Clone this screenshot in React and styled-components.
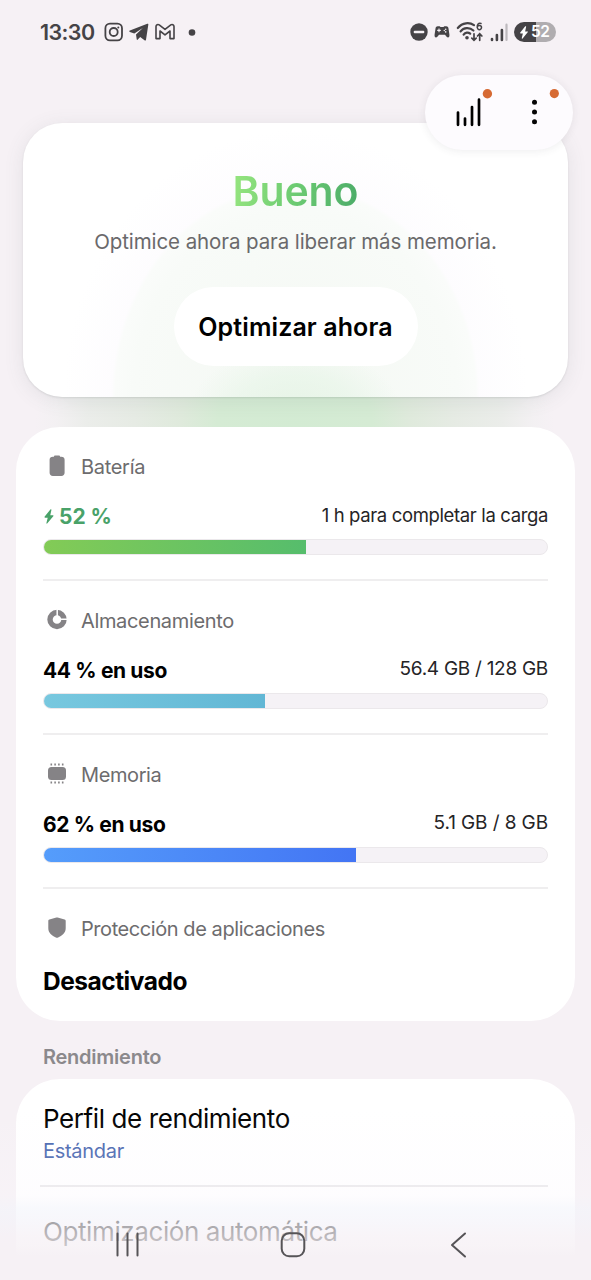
import React from "react";
import styled, { createGlobalStyle } from "styled-components";

const GlobalStyle = createGlobalStyle`
  *, *::before, *::after { box-sizing: border-box; }
  body {
    margin: 0;
    background: #f6f1f5;
    font-family: Inter, "Open Sans", sans-serif;
    color: #000;
  }
`;

const Screen = styled.div`
  position: relative;
  width: 591px;
  height: 1280px;
  overflow: hidden;
  background: #f6f1f5;
`;

const StatusBar = styled.header`
  display: flex;
  align-items: center;
  justify-content: space-between;
  height: 64px;
  padding: 0 35px 0 40px;
  color: #454346;
`;

const StatusGroup = styled.div`
  display: flex;
  align-items: center;
  gap: ${(p) => p.$gap || 0}px;
  height: 24px;

  svg { display: block; flex: none; }
`;

const Clock = styled.span`
  width: 64px;
  font-size: 21.5px;
  line-height: 24px;
  font-weight: 570;
  letter-spacing: -0.6px;
  white-space: nowrap;
`;

const BatteryPill = styled.span`
  display: flex;
  align-items: center;
  gap: 2px;
  width: 42px;
  height: 20px;
  padding-left: 5px;
  border-radius: 10px;
  background: linear-gradient(90deg, #454346 52%, #b0adb0 52%);
  color: #fff;
  font-size: 15.5px;
  line-height: 20px;
  font-weight: 600;
  letter-spacing: -0.6px;
`;

const Actions = styled.div`
  position: absolute;
  z-index: 2;
  top: 75px;
  left: 425px;
  display: flex;
  width: 148px;
  height: 75px;
  border-radius: 38px;
  background: #fdfbfe;
  box-shadow: 0 1px 8px rgba(60, 50, 70, 0.09);
`;

const Glow = styled.div`
  position: absolute;
  top: 190px;
  left: 35px;
  width: 520px;
  height: 480px;
  border-radius: 50%;
  background: radial-gradient(
    closest-side,
    #d3ebd3 0%,
    #d5ebd4 30%,
    #dfeadc 44%,
    #e6ebe4 62%,
    #ebedea 80%,
    rgba(240, 240, 240, 0.5) 92%,
    rgba(246, 241, 245, 0) 100%
  );
`;

const Hero = styled.section`
  position: relative;
  display: flex;
  flex-direction: column;
  align-items: center;
  width: 545px;
  height: 274px;
  margin: 59px 0 0 23px;
  padding-top: 44px;
  border-radius: 39px;
  background:
    radial-gradient(ellipse 105px 60px at 50% 104%, rgba(230, 244, 230, 0.9), rgba(230, 245, 231, 0.6) 55%, rgba(230, 245, 231, 0) 100%),
    radial-gradient(ellipse 184px 212px at 50% 100%, #f4f8f3 0%, #f8fbf8 88%, #fafcfa 98%, rgba(253, 252, 254, 0.9) 100%, rgba(255, 255, 255, 0) 126%),
    #fff;
  box-shadow: 0 1px 2px rgba(70, 80, 80, 0.13), 0 3px 20px rgba(80, 100, 100, 0.11);
`;

const Rating = styled.h1`
  margin: 0;
  font-size: 41px;
  line-height: 48px;
  font-weight: 640;
  letter-spacing: -0.1px;
  color: transparent;
  background: linear-gradient(100deg, #93e37e 5%, #6ccb72 50%, #4eae69 95%);
  background-clip: text;
`;

const Advice = styled.p`
  margin: 14px 0 0;
  font-size: 20.5px;
  line-height: 26px;
  letter-spacing: -0.09px;
  white-space: nowrap;
  color: #6a696b;
`;

const PrimaryButton = styled.button`
  width: 244px;
  height: 79px;
  margin-top: 32px;
  padding: 1px 0 0;
  border: 0;
  border-radius: 40px;
  background: #fff;
  font: 570 25px/78px Inter, sans-serif;
  letter-spacing: 0.1px;
  color: #000;
`;

const Card = styled.section`
  position: relative;
  width: 559px;
  height: ${(p) => p.$height}px;
  margin: ${(p) => p.$top}px 0 0 16px;
  padding: 0 27px;
  border-radius: 44px;
  background: #fff;
`;

const Metric = styled.article`
  padding: 27px 0 24px;
  border-bottom: 2px solid #efeeef;

  &:last-child { border-bottom: 0; }
`;

const MetricHead = styled.div`
  display: flex;
  align-items: center;
  height: 26px;

  svg { display: block; width: 28px; height: 28px; flex: none; margin: -2px 10px 0 0; }
`;

const MetricName = styled.span`
  font-size: 20px;
  line-height: 26px;
  letter-spacing: ${(p) => p.$track || 0}px;
  white-space: nowrap;
  color: #6d6c6e;
`;

const MetricValues = styled.div`
  display: flex;
  justify-content: space-between;
  height: 26px;
  margin: 24px 0 9px;
`;

const Usage = styled.span`
  display: flex;
  align-items: center;
  gap: 4px;
  font-size: 21px;
  line-height: 26px;
  font-weight: 650;
  letter-spacing: ${(p) => p.$track || 0}px;
  white-space: nowrap;
  color: ${(p) => p.$color || "#000"};

  svg { margin-top: -2px; }
`;

const Detail = styled.span`
  font-size: ${(p) => p.$size || 19}px;
  line-height: 22px;
  letter-spacing: ${(p) => p.$track || 0}px;
  white-space: nowrap;
  color: #252426;
`;

const Track = styled.div`
  height: 16px;
  overflow: hidden;
  border: 1px solid #ebe8eb;
  border-radius: 8px;
  background: #f5f2f6;
`;

const Fill = styled.div`
  height: 16px;
  margin: -1px 0 0 -1px;
  border-right: 1px solid ${(p) => p.$to};
  box-sizing: content-box;
  background: linear-gradient(90deg, ${(p) => p.$from}, ${(p) => p.$to});
`;

const State = styled.div`
  margin-top: 23px;
  font-size: 24.5px;
  line-height: 32px;
  font-weight: 650;
  letter-spacing: -0.5px;
`;

const GroupTitle = styled.h2`
  margin: 23px 0 0 43px;
  font-size: 20px;
  line-height: 26px;
  font-weight: 600;
  letter-spacing: -0.25px;
  color: #8b898c;
`;

const Setting = styled.div`
  height: 108px;
  margin: 0 0 0 -3px;
  padding: 23px 0 0 3px;
  border-bottom: 2px solid #e9e8ea;

  &:last-child { border-bottom: 0; padding-top: 28px; }
`;

const SettingName = styled.div`
  font-size: 26px;
  line-height: 34px;
  letter-spacing: -0.4px;
  white-space: nowrap;
`;

const SettingValue = styled.div`
  margin-top: 2px;
  font-size: 20px;
  line-height: 26px;
  letter-spacing: -0.3px;
  color: #3f60ac;
`;

const BottomNav = styled.nav`
  position: absolute;
  z-index: 3;
  left: 0;
  bottom: 0;
  width: 591px;
  height: 170px;
  padding-top: 118px;
  display: flex;
  background: linear-gradient(
    180deg,
    rgba(246, 241, 245, 0) 0%,
    rgba(250, 247, 252, 0.28) 50%,
    rgba(243, 245, 251, 0.6) 58%,
    rgba(244, 243, 249, 0.68) 66%,
    rgba(246, 241, 246, 0.76) 74%,
    rgba(246, 241, 245, 0.82) 80%,
    rgba(246, 241, 245, 1) 86%
  );
  svg { display: block; }
`;

const InstagramIcon = () => (
  <svg width="20" height="20" viewBox="0 0 20 20" fill="none" stroke="currentColor" strokeWidth="1.800">
    <rect x="1.400" y="1.600" width="16.600" height="16.800" rx="4.600" />
    <circle cx="9.700" cy="10" r="4" />
    <circle cx="14.300" cy="5.500" r="1" fill="currentColor" stroke="none" />
  </svg>
);

const TelegramIcon = () => (
  <svg width="20" height="20" viewBox="0 0 20 20" fill="currentColor">
    <path d="M18.3 1.8c.7-.3 1.2.2 1 .9l-2.3 15c-.2.9-.8 1.1-1.5.6l-4.3-3.4-2.4 2.700c-.5.5-1 .3-1.100-.4L7 12.500 13.800 6 5.300 11.500.9 10c-.9-.3-.9-1 0-1.400z" />
  </svg>
);

const GmailIcon = () => (
  <svg width="22" height="20" viewBox="0 0 22 20" fill="none" stroke="currentColor" strokeWidth="1.600" strokeLinejoin="round">
    <path d="M2 16.600V4.500c0-1.700 1.900-2.600 3.200-1.600L11 7.400l5.800-4.500C18.100 1.900 20 2.800 20 4.500v12.100h-4V9l-5 3.900L6 9v7.600z" />
  </svg>
);

const DndIcon = () => (
  <svg width="18" height="18" viewBox="0 0 18 18">
    <circle cx="9" cy="9" r="8.700" fill="currentColor" />
    <rect x="3.700" y="7.800" width="10.600" height="2.400" rx="1" fill="#f6f1f5" />
  </svg>
);

const GamepadIcon = () => (
  <svg width="16" height="14" viewBox="0 0 16 14">
    <path fill="currentColor" d="M3.700 1.300h2l.8.800h3l.8-.800h2c1.200 0 1.800.700 2.100 1.800l1 6.400c.2 1.800-.3 3-1.400 3-.9 0-1.400-.6-2-1.400L11 9.700H5l-1 1.400c-.6.800-1.100 1.400-2 1.400-1.100 0-1.600-1.200-1.400-3l1-6.400C1.900 2 2.500 1.300 3.700 1.300z" />
    <path d="M3.200 5.400h3.600M5 3.600v3.600" stroke="#f6f1f5" strokeWidth="1.100" />
    <circle cx="11.700" cy="4.200" r=".8" fill="#f6f1f5" />
    <circle cx="11.700" cy="6.900" r=".8" fill="#f6f1f5" />
    <circle cx="10.300" cy="5.500" r=".7" fill="#f6f1f5" />
  </svg>
);

const WifiIcon = () => (
  <svg width="28" height="22" viewBox="0 0 28 22" fill="none" stroke="currentColor" strokeWidth="2.200" strokeLinecap="round">
    <path d="M1.800 7C6.500 1.400 13.500 1.100 18 4.200M4.600 10.400c3-4 9-4.400 12.800-.9M7.600 13.700c1.800-2.500 4.600-2.700 6.600-1" />
    <circle cx="11" cy="16.700" r="1.800" fill="currentColor" stroke="none" />
    <path strokeWidth="1.700" d="M18 12.800v6.500m-2.200-2.200 2.200 2.200 2.200-2.200M23.700 19.300v-6.500m-2.200 2.200 2.200-2.200 2.200 2.200" />
    <path strokeWidth="1.500" d="M25 2.500c-2.500-.9-4 1-3.800 3.900M23.400 4.500a2.100 2.100 0 1 1 0 4.200 2.100 2.100 0 0 1 0-4.200" />
  </svg>
);

const SignalIcon = () => (
  <svg width="18" height="20" viewBox="0 0 18 20" strokeWidth="2.600" strokeLinecap="round" stroke="currentColor">
    <path d="M2 17v1M6.900 13v5M11.900 8v10" />
    <path d="M16.500 2.700V18" stroke="#bdb9bd" strokeWidth="2.200" />
  </svg>
);

const BoltIcon = ({ width = 10, height = 13 }) => (
  <svg width={width} height={height} viewBox="0 0 10 14" fill="currentColor">
    <path d="M6.300.4 1 7.100c-.4.600-.2 1 .4 1h2.400L2.600 13c-.1.700.4.900.9.400L9 6.800c.5-.6.200-1-.4-1H6.200L7.300.8c.1-.6-.5-.9-1-.4z" />
  </svg>
);

const Dot = () => (
  <svg width="32" height="20">
    <circle cx="16" cy="10.500" r="3.300" fill="currentColor" />
  </svg>
);

const ActionIcons = () => (
  <svg width="148" height="75" viewBox="0 0 148 75">
    <g stroke="#000" strokeWidth="2.700" strokeLinecap="round">
      <path d="M33 37.600v12.200M40 43.500v6.300M47 32v17.800M54 24.700v25.100" />
    </g>
    <g fill="#050505">
      <circle cx="109.500" cy="27.200" r="2.500" />
      <circle cx="109.500" cy="37" r="2.500" />
      <circle cx="109.500" cy="46.700" r="2.500" />
    </g>
    <circle cx="62.400" cy="18.700" r="4.700" fill="#d66a33" />
    <circle cx="129.300" cy="18.600" r="4.600" fill="#d66a33" />
  </svg>
);

const BatteryIcon = () => (
  <svg viewBox="0 0 28 28" fill="#858386">
    <path d="M10.900 4.800c.1-.8.600-1.200 1.300-1.200h3.600c.7 0 1.200.4 1.300 1.200h1.200c2.100 0 3.300 1 3.300 3v13c0 2-1.200 3.200-3.300 3.200H9.900c-2.100 0-3.300-1.200-3.300-3.200v-13c0-2 1.200-3 3.300-3z" />
  </svg>
);

const StorageIcon = () => (
  <svg viewBox="0 0 28 28">
    <circle cx="14" cy="13.500" r="7" fill="none" stroke="#858386" strokeWidth="5.400" />
    <path d="M14.200 13.500V2.500M14 13.200h11" stroke="#fff" strokeWidth="1.500" />
  </svg>
);

const MemoryIcon = () => (
  <svg viewBox="0 0 28 28">
    <rect x="5" y="7" width="18" height="13" rx="3.500" fill="#858386" />
    <path d="M8.300 3.500v2M12.100 3.500v2M15.900 3.500v2M19.700 3.500v2M8.300 21.400v2M12.100 21.400v2M15.900 21.400v2M19.700 21.400v2" stroke="#858386" strokeWidth="1.600" />
  </svg>
);

const ShieldIcon = () => (
  <svg viewBox="0 0 28 28" fill="#858386">
    <path d="M13.400 3.600c.4-.2.800-.2 1.200 0l7 2c.8.200 1.100.7 1.100 1.500v7.200c0 4.700-3.800 7.600-7.600 9.100-.8.300-1.400.3-2.200 0-3.800-1.500-7.600-4.400-7.600-9.100V7.100c0-.8.300-1.300 1.100-1.500z" />
  </svg>
);

const NavIcons = () => (
  <svg width="591" height="52" viewBox="0 0 591 52" fill="none" stroke="#565457" strokeWidth="2" strokeLinecap="round" strokeLinejoin="round">
    <path d="M117.500 5.500v22M127.500 5.500v22M137.500 5.500v22" />
    <rect x="281.700" y="5.300" width="22.600" height="23" rx="7.500" />
    <path d="M465 5.500 452 17l13 11.500" />
  </svg>
);

const metrics = [
  { name: "Batería", nameTrack: -0.3, Icon: BatteryIcon, usage: "52 %", charging: true, detail: "1 h para completar la carga", detailSize: 18.5, detailTrack: -0.36, percent: 52, from: "#83cb56", to: "#56bd6c" },
  { name: "Almacenamiento", nameTrack: -0.35, Icon: StorageIcon, usage: "44 % en uso", detail: "56.4 GB / 128 GB", detailTrack: -0.28, percent: 44, from: "#78c8df", to: "#62b7d5" },
  { name: "Memoria", nameTrack: -0.4, Icon: MemoryIcon, usage: "62 % en uso", detail: "5.1 GB / 8 GB", detailTrack: -0.1, percent: 62, from: "#559dfb", to: "#4375f4" },
];

export default function App() {
  return (
    <>
      <GlobalStyle />
      <Screen>
        <Glow />
        <StatusBar>
          <StatusGroup>
            <Clock>13:30</Clock>
            <StatusGroup $gap={5}>
              <InstagramIcon />
              <TelegramIcon />
              <GmailIcon />
            </StatusGroup>
            <Dot />
          </StatusGroup>
          <StatusGroup $gap={6}>
            <DndIcon />
            <GamepadIcon />
            <WifiIcon />
            <SignalIcon />
            <BatteryPill><BoltIcon />52</BatteryPill>
          </StatusGroup>
        </StatusBar>

        <Actions><ActionIcons /></Actions>

        <Hero>
          <Rating>Bueno</Rating>
          <Advice>Optimice ahora para liberar más memoria.</Advice>
          <PrimaryButton>Optimizar ahora</PrimaryButton>
        </Hero>

        <Card $top={30} $height={594}>
          {metrics.map(({ name, nameTrack, Icon, usage, charging, detail, detailSize, detailTrack, percent, from, to }) => (
            <Metric key={name}>
              <MetricHead><Icon /><MetricName $track={nameTrack}>{name}</MetricName></MetricHead>
              <MetricValues>
                <Usage $color={charging ? "#49a269" : undefined} $track={charging ? 0 : -0.36}>
                  {charging && <BoltIcon width={12} height={15} />}
                  {usage}
                </Usage>
                <Detail $size={detailSize} $track={detailTrack}>{detail}</Detail>
              </MetricValues>
              <Track><Fill $from={from} $to={to} style={{ width: `${percent}%` }} /></Track>
            </Metric>
          ))}
          <Metric>
            <MetricHead><ShieldIcon /><MetricName $track={-0.43}>Protección de aplicaciones</MetricName></MetricHead>
            <State>Desactivado</State>
          </Metric>
        </Card>

        <GroupTitle>Rendimiento</GroupTitle>
        <Card $top={9} $height={240}>
          <Setting>
            <SettingName>Perfil de rendimiento</SettingName>
            <SettingValue>Estándar</SettingValue>
          </Setting>
          <Setting>
            <SettingName>Optimización automática</SettingName>
          </Setting>
        </Card>

        <BottomNav><NavIcons /></BottomNav>
      </Screen>
    </>
  );
}
